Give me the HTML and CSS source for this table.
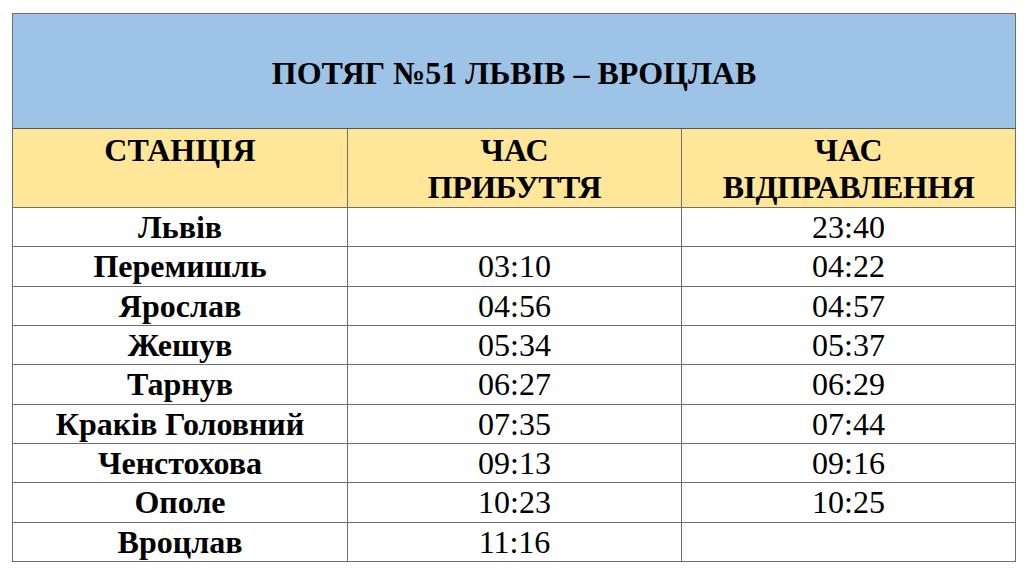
FILE: index.html
```html
<!DOCTYPE html>
<html>
<head>
<meta charset="utf-8">
<link rel="stylesheet" href="styles.css">
</head>
<body>
<div class="sheet">
  <p class="cell title">ПОТЯГ №51 ЛЬВІВ – ВРОЦЛАВ</p>
  <p class="cell head">СТАНЦІЯ</p>
  <p class="cell head">ЧАС<br><span class="cond">ПРИБУТТЯ</span></p>
  <p class="cell head">ЧАС<br><span class="cond">ВІДПРАВЛЕННЯ</span></p>

  <p class="cell st">Львів</p><p class="cell"></p><p class="cell">23:40</p>
  <p class="cell st">Перемишль</p><p class="cell">03:10</p><p class="cell">04:22</p>
  <p class="cell st">Ярослав</p><p class="cell">04:56</p><p class="cell">04:57</p>
  <p class="cell st">Жешув</p><p class="cell">05:34</p><p class="cell">05:37</p>
  <p class="cell st">Тарнув</p><p class="cell">06:27</p><p class="cell">06:29</p>
  <p class="cell st">Краків Головний</p><p class="cell">07:35</p><p class="cell">07:44</p>
  <p class="cell st">Ченстохова</p><p class="cell">09:13</p><p class="cell">09:16</p>
  <p class="cell st">Ополе</p><p class="cell">10:23</p><p class="cell">10:25</p>
  <p class="cell st">Вроцлав</p><p class="cell">11:16</p><p class="cell"></p>
</div>
</body>
</html>
```
FILE: styles.css
```css
body {
  margin: 0;
  padding: 13px 0 0 12px;
}
.sheet {
  color: #000;
  width: 1004px;
  box-sizing: border-box;
  display: grid;
  grid-template-columns: 335px 334px 334px;
  grid-template-rows: 115px 79px repeat(9, 39.33px);
  border-top: 1px solid #6e6e6e;
  border-left: 1px solid #6e6e6e;
}
.cell {
  font-family: "Liberation Serif";
  margin: 0;
  box-sizing: border-box;
  border-right: 1px solid #6e6e6e;
  border-bottom: 1px solid #6e6e6e;
  text-align: center;
  font-size: 32px;
  line-height: 37px;
  padding-top: 1px;
  white-space: nowrap;
  align-content: center;
}
.title {
  grid-column: 1 / 4;
  background: #9dc3e6;
  font-weight: bold;
  border-bottom-color: #555;
  padding-top: 4px;
}
.head {
  background: #ffe699;
  font-weight: bold;
  align-content: start;
  padding-top: 3px;
}
.cond {
  letter-spacing: -0.5px;
}
.st {
  font-weight: bold;
}
```
